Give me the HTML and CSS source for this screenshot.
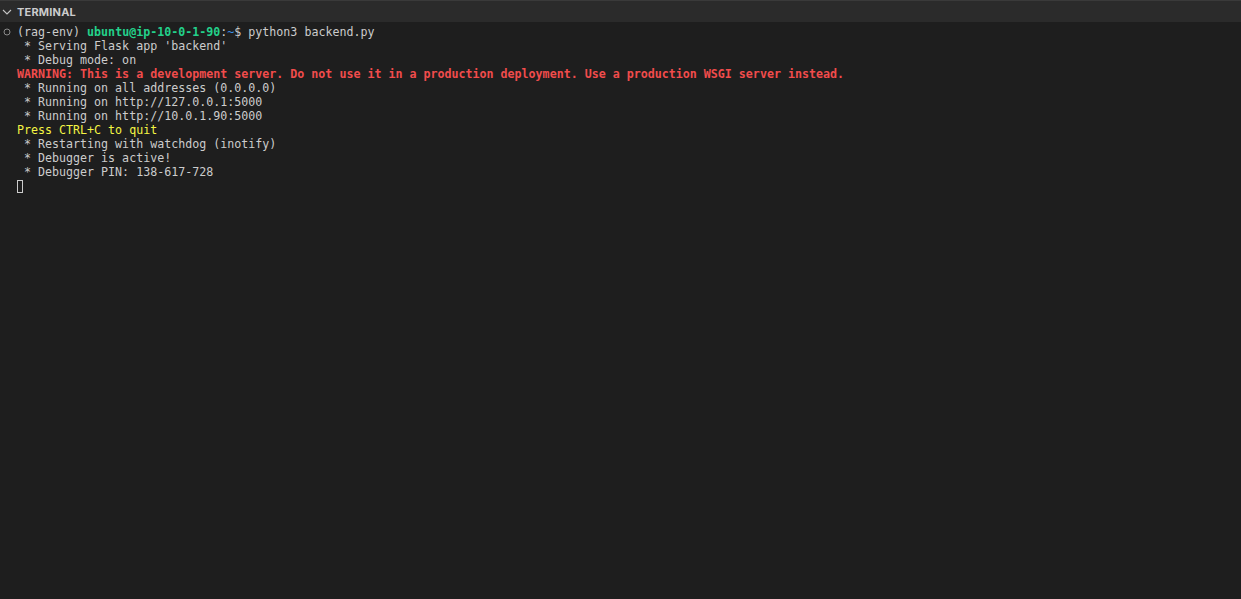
FILE: index.html
```html
<!DOCTYPE html>
<html>
<head>
<meta charset="utf-8">
<link rel="stylesheet" href="styles.css">
</head>
<body>
<div class="panel">
  <div class="header">
    <svg class="chev" width="10" height="10" viewBox="0 0 10 10"><path d="M1 3 L5 7 L9 3" fill="none" stroke="#c5c5c5" stroke-width="1.1"/></svg>
    <span class="title">TERMINAL</span>
  </div>
  <div class="term">
    <div class="line first"><svg class="dot" width="8" height="8" viewBox="0 0 8 8"><circle cx="4" cy="4" r="3" fill="none" stroke="#8a8a8a" stroke-width="1"/></svg>(rag-env) <span class="green">ubuntu@ip-10-0-1-90</span>:<span class="blue">~</span>$ python3 backend.py</div>
    <div class="line"> * Serving Flask app 'backend'</div>
    <div class="line"> * Debug mode: on</div>
    <div class="line red">WARNING: This is a development server. Do not use it in a production deployment. Use a production WSGI server instead.</div>
    <div class="line"> * Running on all addresses (0.0.0.0)</div>
    <div class="line"> * Running on http://127.0.0.1:5000</div>
    <div class="line"> * Running on http://10.0.1.90:5000</div>
    <div class="line yellow">Press CTRL+C to quit</div>
    <div class="line"> * Restarting with watchdog (inotify)</div>
    <div class="line"> * Debugger is active!</div>
    <div class="line"> * Debugger PIN: 138-617-728</div>
    <div class="line"><span class="cursor"></span></div>
  </div>
</div>
</body>
</html>
```
FILE: styles.css
```css
html, body {
  margin: 0;
  padding: 0;
  background: #1e1e1e;
  height: 100%;
}
.panel {
  height: 599px;
  background: #1e1e1e;
  display: flex;
  flex-direction: column;
}
.header {
  height: 22px;
  box-sizing: border-box;
  border-top: 1px solid #3a3a3a;
  background: #2b2b2b;
  display: flex;
  align-items: center;
  padding-left: 2px;
}
.chev {
  margin-right: 5px;
}
.title {
  font-family: "Inter", "Noto Sans", sans-serif;
  font-size: 11px;
  font-weight: 700;
  color: #cccccc;
  letter-spacing: 0.2px;
}
.term {
  padding: 3px 0 0 17px;
  font-family: "DejaVu Sans Mono", monospace;
  font-size: 11.65px;
  line-height: 14px;
  color: #cccccc;
}
.line {
  height: 14px;
  position: relative;
  white-space: pre;
}
.dot {
  position: absolute;
  left: -14px;
  top: 3px;
}
.green {
  color: #23d18b;
  font-weight: 700;
}
.blue {
  color: #3b8eea;
}
.red {
  color: #f14c4c;
  font-weight: 700;
}
.yellow {
  color: #f5f543;
}
.cursor {
  display: inline-block;
  width: 6px;
  height: 13px;
  box-sizing: border-box;
  border: 1px solid #cccccc;
  vertical-align: top;
  margin-top: 1px;
}
```
